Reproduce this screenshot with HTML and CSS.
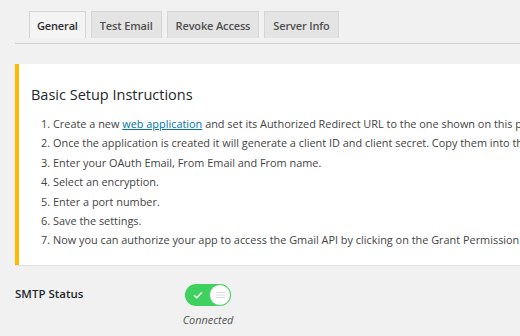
FILE: index.html
```
<!DOCTYPE html>
<html>
<head>
<meta charset="utf-8">
<link rel="stylesheet" href="styles.css">
</head>
<body>
<div class="page">
  <nav class="tabs">
    <a class="tab active">General</a>
    <a class="tab">Test Email</a>
    <a class="tab">Revoke Access</a>
    <a class="tab">Server Info</a>
  </nav>
  <section class="notice">
    <h2 class="notice-title">Basic Setup Instructions</h2>
    <ol class="steps">
      <li>Create a new <a class="link">web application</a> and set its Authorized Redirect URL to the one shown on this page.</li>
      <li>Once the application is created it will generate a client ID and client secret. Copy them into the fields below.</li>
      <li>Enter your OAuth Email, From Email and From name.</li>
      <li>Select an encryption.</li>
      <li>Enter a port number.</li>
      <li>Save the settings.</li>
      <li>Now you can authorize your app to access the Gmail API by clicking on the Grant Permission button.</li>
    </ol>
  </section>
  <div class="status-row">
    <div class="status-label">SMTP Status</div>
    <div class="status-value">
      <div class="toggle">
        <svg class="check" width="10" height="8" viewBox="0 0 10 8"><path d="M1 4.2 L3.8 6.8 L9 1.2" fill="none" stroke="#fff" stroke-width="1.4"/></svg>
        <div class="knob">
          <svg width="9" height="6" viewBox="0 0 9 6"><path d="M0 0.5h9M0 3h9M0 5.5h9" stroke="#dcdcdc" stroke-width="1"/></svg>
        </div>
      </div>
      <div class="status-text">Connected</div>
    </div>
  </div>
</div>
</body>
</html>
```
FILE: styles.css
```
html, body {
  margin: 0;
  padding: 0;
}
body {
  background: #f1f1f1;
  font-family: "Open Sans", "Noto Sans", sans-serif;
  color: #444;
  width: 520px;
  height: 336px;
  overflow: hidden;
}
.page {
  padding-left: 15px;
}
.tabs {
  display: flex;
  gap: 5px;
  padding: 11px 0 5px 14px;
  border-bottom: 1px solid #d0d0d0;
}
.tab {
  height: 26px;
  padding: 0 8px;
  border: 1px solid #d6d6d6;
  border-bottom: none;
  background: #e4e4e4;
  font-size: 11px;
  font-weight: 600;
  letter-spacing: -0.15px;
  line-height: 27px;
  color: #505050;
}
.tab.active {
  background: #f4f4f4;
  color: #2e2e2e;
  padding: 0 7px;
}
.notice {
  margin-top: 20px;
  background: #fff;
  border-left: 4px solid #ffb900;
  padding: 20px 12px 8px 12px;
  height: 173px;
  overflow: hidden;
  box-shadow: 0 1px 1px rgba(0,0,0,0.06);
}
.notice-title {
  margin: 0 0 9px 0;
  font-size: 14.5px;
  font-weight: 500;
  color: #23282d;
  line-height: 21px;
}
.steps {
  margin: 0;
  padding-left: 22px;
  font-size: 10.9px;
  line-height: 19.4px;
  color: #444;
  white-space: nowrap;
}
.link {
  color: #0073aa;
  text-decoration: underline;
}
.status-row {
  display: flex;
  margin-top: 19px;
}
.status-label {
  width: 167px;
  font-size: 11.5px;
  font-weight: 600;
  color: #23282d;
  padding-top: 2px;
}
.status-value {
  display: flex;
  flex-direction: column;
  align-items: center;
  width: 52px;
}
.toggle {
  width: 46px;
  height: 22px;
  border-radius: 11px;
  background: #3ed160;
  display: flex;
  align-items: center;
  justify-content: space-between;
  padding: 0 0 0 8px;
  box-sizing: border-box;
}
.knob {
  width: 22px;
  height: 22px;
  box-sizing: border-box;
  border: 1px solid #4cd56c;
  border-radius: 50%;
  background: #fff;
  display: flex;
  align-items: center;
  justify-content: center;
}
.status-text {
  margin-top: 6px;
  font-size: 10.9px;
  font-style: italic;
  color: #555;
}
```
